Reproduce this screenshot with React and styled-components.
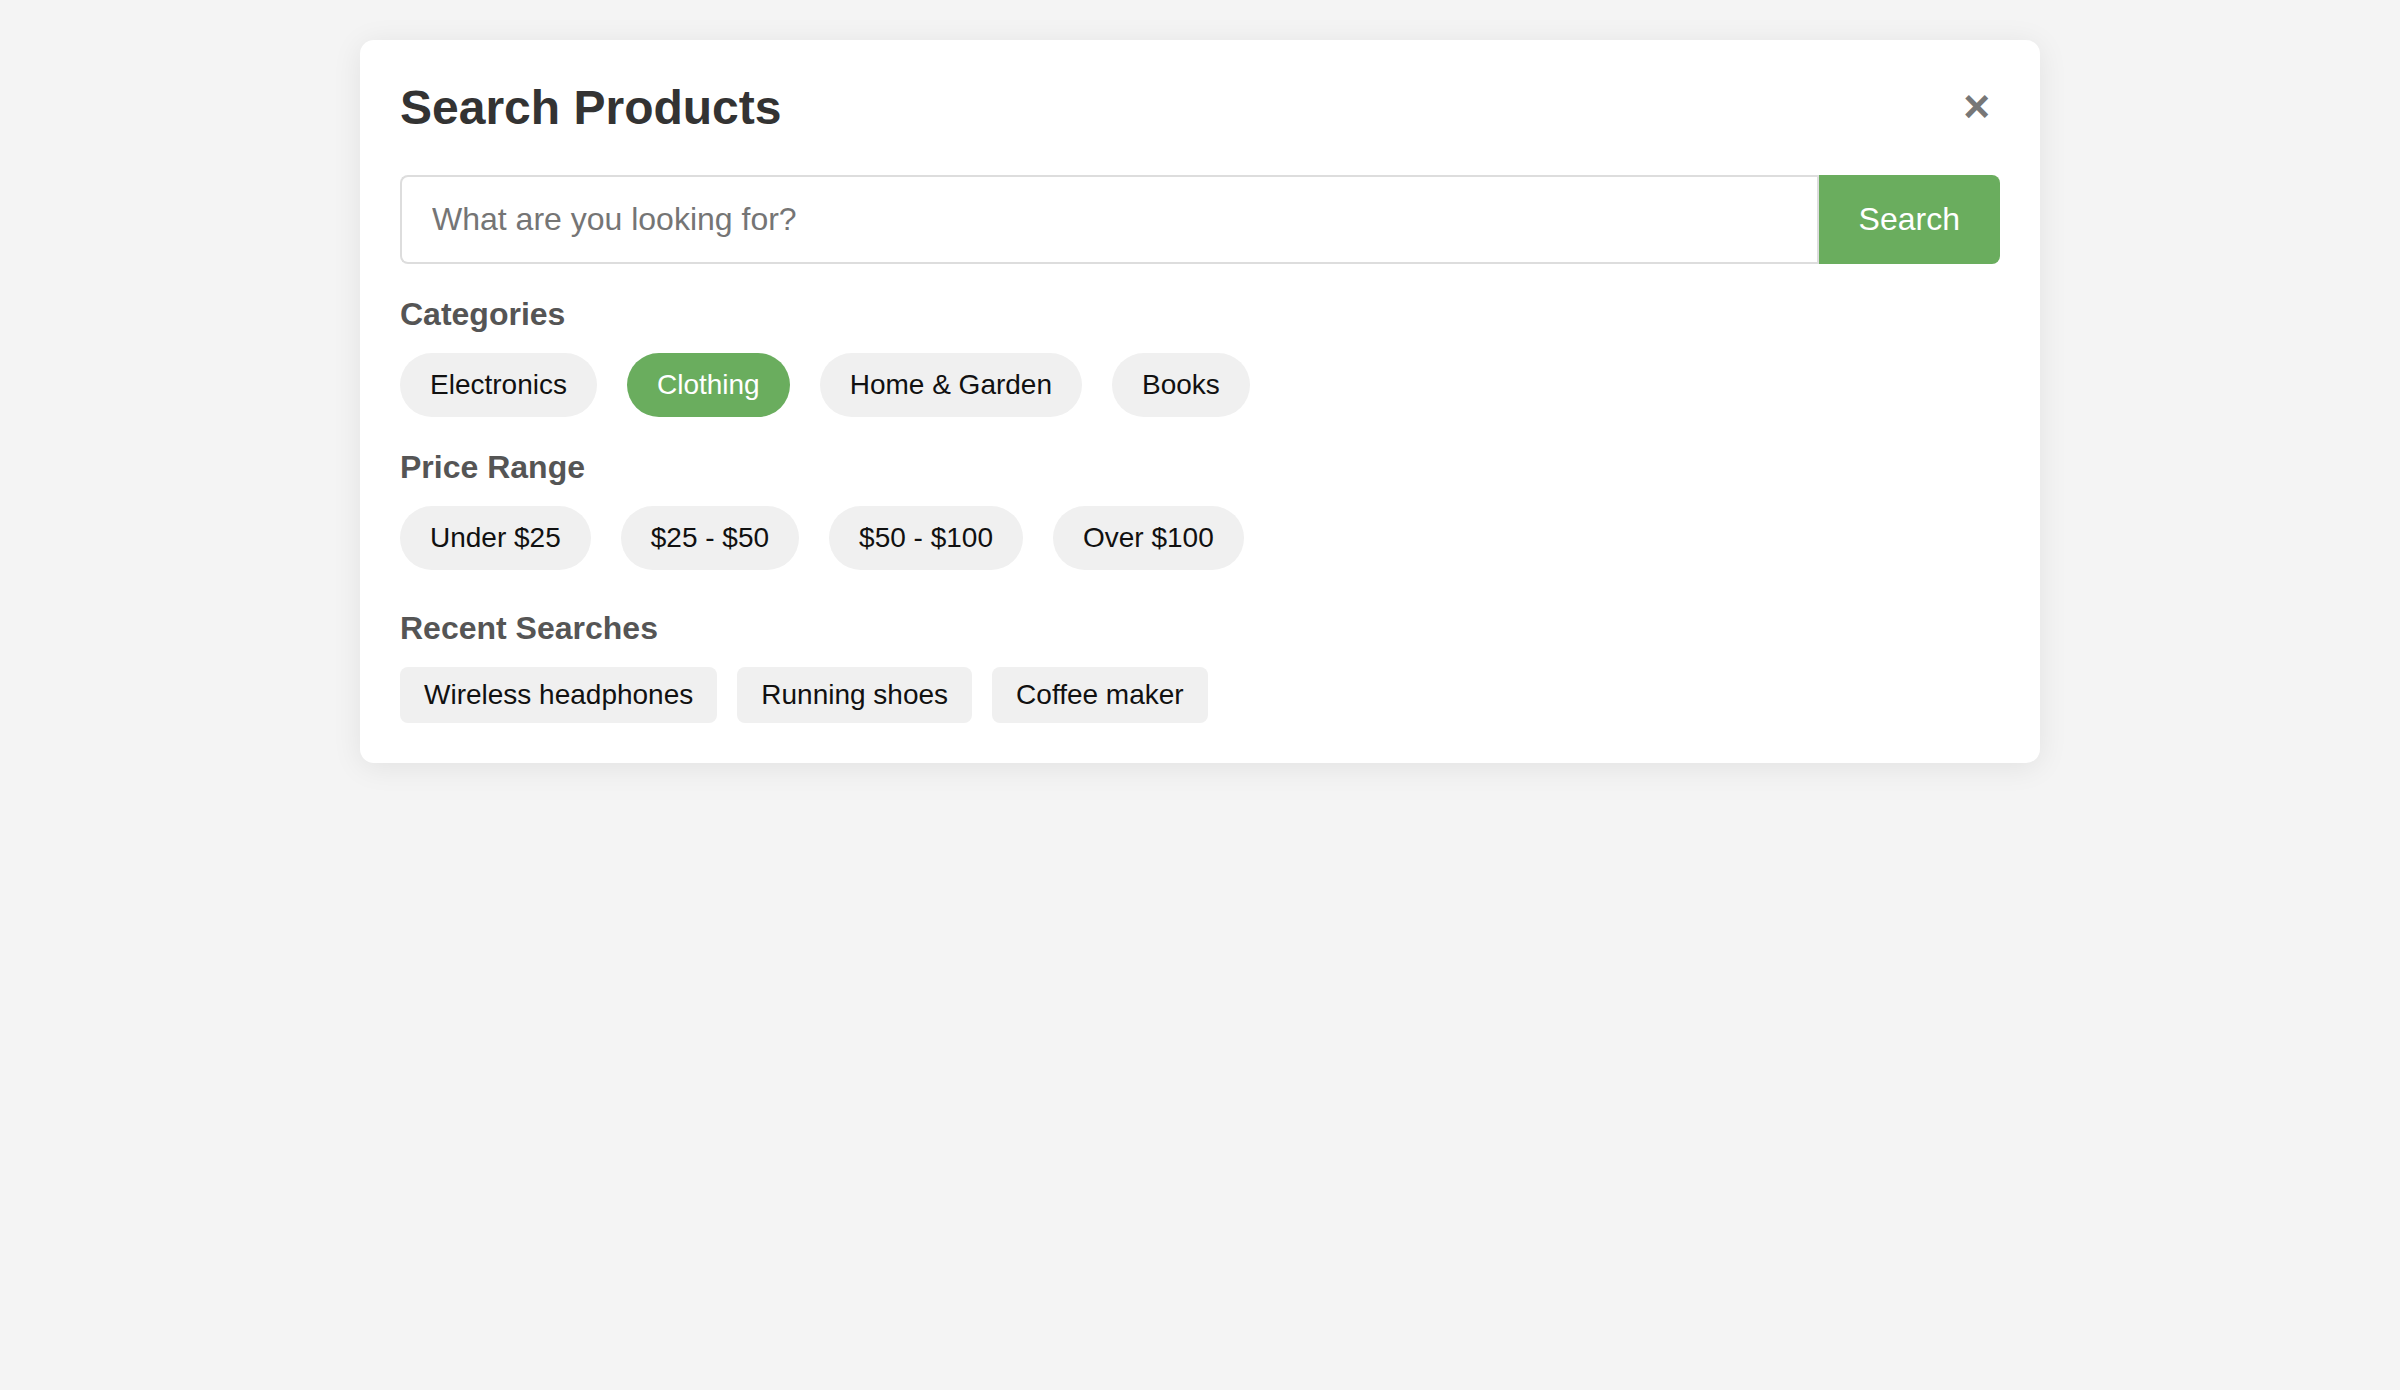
import React, { useState } from 'react';
import styled, { createGlobalStyle } from 'styled-components';

const GlobalStyle = createGlobalStyle`
  body {
    margin: 0;
    background: #f4f4f4;
    font-family: "Liberation Sans", Arial, sans-serif;
  }
`;

const Card = styled.div`
  box-sizing: border-box;
  width: 1680px;
  margin: 40px auto;
  padding: 40px;
  background: #fff;
  border-radius: 14px;
  box-shadow: 0 4px 30px rgba(0, 0, 0, 0.08);
`;

const Header = styled.div`
  display: flex;
  justify-content: space-between;
  align-items: center;
  margin-bottom: 40px;
`;

const Title = styled.h2`
  margin: 0;
  font-size: 48px;
  line-height: 55px;
  font-weight: 700;
  color: #333;
`;

const CloseButton = styled.button`
  background: none;
  border: none;
  padding: 0 10px 3px;
  font-family: "Liberation Sans", Arial, sans-serif;
  font-size: 46px;
  font-weight: 700;
  line-height: 48px;
  color: #777;
  cursor: pointer;
`;

const SearchBar = styled.form`
  display: flex;
  height: 89px;
`;

const SearchInput = styled.input`
  flex: 1;
  box-sizing: border-box;
  height: 100%;
  padding: 0 30px;
  border: 2px solid #ddd;
  border-right: none;
  border-radius: 8px 0 0 8px;
  font-family: "Liberation Sans", Arial, sans-serif;
  font-size: 32px;
  color: #333;
  outline: none;

  &::placeholder {
    color: #757575;
  }
`;

const SearchButton = styled.button`
  border: none;
  border-left: 2px solid #ddd;
  padding: 0 40px;
  background: #6aad5e;
  color: #fff;
  font-family: "Liberation Sans", Arial, sans-serif;
  font-size: 32px;
  border-radius: 0 8px 8px 0;
  cursor: pointer;
`;

const Section = styled.div`
  margin-top: ${props => props.$space}px;
`;

const SectionTitle = styled.h3`
  margin: 0 0 20px;
  font-size: 32px;
  line-height: 37px;
  font-weight: 700;
  color: #555;
`;

const ChipRow = styled.div`
  display: flex;
  flex-wrap: wrap;
  gap: ${props => props.$gap}px;
`;

const Chip = styled.button`
  border: none;
  padding: 16px 30px;
  border-radius: 32px;
  background: ${props => (props.$active ? '#6aad5e' : '#f0f0f0')};
  color: ${props => (props.$active ? '#fff' : '#111')};
  font-family: "Liberation Sans", Arial, sans-serif;
  font-size: 28px;
  line-height: 32px;
  cursor: pointer;
`;

const RecentTag = styled.button`
  border: none;
  padding: 12px 24px;
  border-radius: 8px;
  background: #f0f0f0;
  color: #111;
  font-family: "Liberation Sans", Arial, sans-serif;
  font-size: 28px;
  line-height: 32px;
  cursor: pointer;
`;

const categories = ['Electronics', 'Clothing', 'Home & Garden', 'Books'];
const prices = ['Under $25', '$25 - $50', '$50 - $100', 'Over $100'];
const recent = ['Wireless headphones', 'Running shoes', 'Coffee maker'];

export default function App() {
  const [category, setCategory] = useState('Clothing');
  const [price, setPrice] = useState(null);
  const [query, setQuery] = useState('');

  return (
    <>
      <GlobalStyle />
      <Card>
        <Header>
          <Title>Search Products</Title>
          <CloseButton aria-label="Close">×</CloseButton>
        </Header>

        <SearchBar onSubmit={e => e.preventDefault()}>
          <SearchInput
            type="text"
            placeholder="What are you looking for?"
            value={query}
            onChange={e => setQuery(e.target.value)}
          />
          <SearchButton type="submit">Search</SearchButton>
        </SearchBar>

        <Section $space={32}>
          <SectionTitle>Categories</SectionTitle>
          <ChipRow $gap={30}>
            {categories.map(c => (
              <Chip key={c} $active={c === category} onClick={() => setCategory(c)}>
                {c}
              </Chip>
            ))}
          </ChipRow>
        </Section>

        <Section $space={32}>
          <SectionTitle>Price Range</SectionTitle>
          <ChipRow $gap={30}>
            {prices.map(p => (
              <Chip key={p} $active={p === price} onClick={() => setPrice(p)}>
                {p}
              </Chip>
            ))}
          </ChipRow>
        </Section>

        <Section $space={40}>
          <SectionTitle>Recent Searches</SectionTitle>
          <ChipRow $gap={20}>
            {recent.map(r => (
              <RecentTag key={r} onClick={() => setQuery(r)}>
                {r}
              </RecentTag>
            ))}
          </ChipRow>
        </Section>
      </Card>
    </>
  );
}
